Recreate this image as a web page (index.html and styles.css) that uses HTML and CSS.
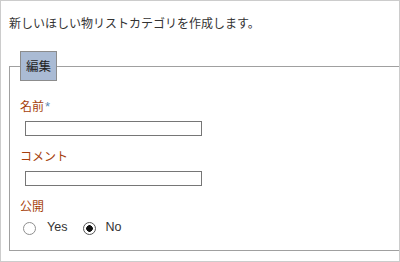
FILE: index.html
```html
<!DOCTYPE html>
<html lang="ja">
<head>
<meta charset="utf-8">
<title>カテゴリ作成</title>
<link rel="stylesheet" href="styles.css">
</head>
<body>
<div class="frame">
  <p class="intro">新しいほしい物リストカテゴリを作成します。</p>
  <fieldset class="edit">
    <legend class="edit-legend">編集</legend>
    <div class="field">
      <label class="field-label" for="name">名前<span class="req">*</span></label>
      <input class="text-input" id="name" type="text">
    </div>
    <div class="field">
      <label class="field-label" for="comment">コメント</label>
      <input class="text-input" id="comment" type="text">
    </div>
    <div class="field">
      <span class="field-label">公開</span>
      <div class="radio-row">
        <input class="radio radio-yes" type="radio" name="pub" id="pub-yes">
        <label class="radio-text radio-text-yes" for="pub-yes">Yes</label>
        <input class="radio radio-no" type="radio" name="pub" id="pub-no" checked>
        <label class="radio-text radio-text-no" for="pub-no">No</label>
      </div>
    </div>
  </fieldset>
</div>
</body>
</html>
```
FILE: styles.css
```css
html, body {
  margin: 0;
  padding: 0;
  background: #fff;
}

.frame {
  box-sizing: border-box;
  width: 400px;
  height: 262px;
  border: 1px solid #cccccc;
  overflow: hidden;
  padding: 14px 0 0 8px;
  font-family: "Noto Sans CJK JP", "Noto Sans", sans-serif;
}

.intro {
  margin: 0;
  font-size: 12px;
  line-height: 16px;
  color: #333;
}

.edit {
  margin: 20px -20px 0 0;
  padding: 17px 10px 15px 10px;
  border: 1px solid #a0a0a0;
  min-width: 0;
}

.edit-legend {
  margin: 0;
  padding: 0 5px;
  border: 1px solid #8c8c8c;
  background: #aabbd4;
  font-size: 12.5px;
  line-height: 28px;
  color: #222;
}

.field + .field {
  margin-top: 12px;
}

.field-label {
  display: block;
  height: 16px;
  font-size: 12px;
  line-height: 16px;
  color: #a63f0c;
}

.req {
  font-family: "Liberation Sans", Arial, sans-serif;
  font-size: 13px;
  line-height: 0;
  color: #5b89b5;
  margin-left: 1px;
}

.text-input {
  display: block;
  box-sizing: border-box;
  width: 177px;
  height: 15px;
  margin: 7px 0 0 5px;
  padding: 0;
  border: 1px solid #767676;
  background: #fff;
}

.radio-row {
  display: flex;
  align-items: flex-start;
  margin-top: 5px;
}

.radio {
  appearance: none;
  -webkit-appearance: none;
  box-sizing: border-box;
  width: 13px;
  height: 13px;
  margin: 3px 0 0 0;
  border: 1px solid #8f8f8f;
  border-radius: 50%;
  background: #fff;
}

.radio:checked {
  border-color: #555;
  background: radial-gradient(circle, #111 0, #111 3px, #fff 3.6px);
}

.radio-yes {
  margin-left: 3px;
}

.radio-no {
  margin-left: 16px;
}

.radio-text {
  font-family: "Liberation Sans", Arial, sans-serif;
  font-size: 12.5px;
  line-height: 16px;
  color: #333;
}

.radio-text-yes {
  margin-left: 11px;
}

.radio-text-no {
  margin-left: 9px;
}
```
